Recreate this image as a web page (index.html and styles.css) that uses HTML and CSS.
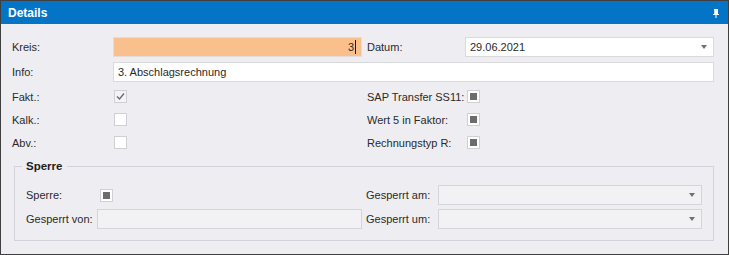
FILE: index.html
```html
<!DOCTYPE html>
<html>
<head>
<meta charset="utf-8">
<link rel="stylesheet" href="styles.css">
</head>
<body>
<div class="panel">
  <div class="header">
    <span class="title">Details</span>
    <svg class="pin" width="8" height="9" viewBox="0 0 8 9">
      <path d="M2 0h4v5H2z" fill="#fff"/>
      <path d="M1 5h6v1H1z" fill="#fff"/>
      <path d="M2 1h1v4H2z" fill="#cfe3f5"/>
      <path d="M3.5 6h1v3h-1z" fill="#fff"/>
    </svg>
  </div>
  <div class="content">
    <div class="form top">
      <label class="lbl">Kreis:</label>
      <div class="field orange num"><span>3</span><i class="caret"></i></div>
      <label class="lbl lbl2">Datum:</label>
      <div class="field combo"><span>29.06.2021</span><i class="arrow"></i></div>
      <label class="lbl">Info:</label>
      <div class="field wide"><span>3. Abschlagsrechnung</span></div>
    </div>
    <div class="form checks">
      <label class="lbl">Fakt.:</label>
      <div class="cbcell"><span class="cb checked"><svg width="11" height="11" viewBox="0 0 11 11"><path d="M2 5.5l2.5 2.5L9 2.5" fill="none" stroke="#6a6a6a" stroke-width="1.4"/></svg></span></div>
      <label class="lbl lbl2">SAP Transfer SS11:</label>
      <div class="cbcell r"><span class="cb ind"></span></div>
      <label class="lbl">Kalk.:</label>
      <div class="cbcell"><span class="cb"></span></div>
      <label class="lbl lbl2">Wert 5 in Faktor:</label>
      <div class="cbcell r"><span class="cb ind"></span></div>
      <label class="lbl">Abv.:</label>
      <div class="cbcell"><span class="cb"></span></div>
      <label class="lbl lbl2">Rechnungstyp R:</label>
      <div class="cbcell r"><span class="cb ind"></span></div>
    </div>
    <fieldset class="group">
      <legend>Sperre</legend>
      <div class="gform">
        <label class="lbl">Sperre:</label>
        <div class="cbcell g"><span class="cb ind"></span></div>
        <label class="lbl lbl2">Gesperrt am:</label>
        <div class="field combo disabled"><span></span><i class="arrow"></i></div>
        <label class="lbl">Gesperrt von:</label>
        <div class="field disabled"><span></span></div>
        <label class="lbl lbl2">Gesperrt um:</label>
        <div class="field combo disabled"><span></span><i class="arrow"></i></div>
      </div>
    </fieldset>
  </div>
</div>
</body>
</html>
```
FILE: styles.css
```css
* { box-sizing: border-box; }
html, body { margin: 0; padding: 0; }
body {
  width: 729px;
  height: 255px;
  font-family: "Liberation Sans", Arial, sans-serif;
  font-size: 11px;
  color: #2a2a2a;
  background: #eeeef2;
}
.panel {
  width: 729px;
  height: 255px;
  border: 1px solid #3f3f3f;
  background: #eeeef2;
  display: flex;
  flex-direction: column;
}
.header {
  height: 23px;
  flex: none;
  background: #0374c6;
  display: flex;
  align-items: center;
  justify-content: space-between;
  padding: 0 8px 0 7px;
}
.title {
  color: #fff;
  font-weight: bold;
  font-size: 12px;
}
.pin { display: block; margin-top: 1px; }
.content {
  padding: 13px 14px 0 11px;
}
.form {
  display: grid;
  grid-template-columns: 101px 249px 103px 249px;
}
.top {
  grid-template-rows: 20px 20px;
  row-gap: 5px;
}
.checks {
  margin-top: 3px;
  grid-template-rows: 23px 23px 23px;
}
.lbl {
  display: flex;
  align-items: center;
  white-space: nowrap;
}
.lbl2 { padding-left: 5px; }
.field {
  display: flex;
  align-items: center;
  border: 1px solid #d9d9de;
  background: #fff;
  padding: 0 5px 0 4px;
}
.field.wide { grid-column: 2 / 5; }
.orange {
  background: #f9c08e;
  border-color: #e4dcd6;
  justify-content: flex-end;
  padding-right: 5px;
}
.caret {
  width: 1px;
  height: 14px;
  background: #1a1a1a;
  margin-left: 1px;
}
.combo { justify-content: space-between; padding-right: 6px; }
.arrow {
  width: 0;
  height: 0;
  border-left: 3.5px solid transparent;
  border-right: 3.5px solid transparent;
  border-top: 4px solid #707070;
}
.disabled {
  background: #f2f2f4;
  border-color: #d4d4dc;
}
.cbcell {
  display: flex;
  align-items: center;
  padding-left: 1px;
}
.cbcell.r { padding-left: 2px; }
.cbcell.g { padding-left: 3px; }
.cb {
  width: 13px;
  height: 13px;
  border: 1px solid #cfcfd4;
  background: #fff;
  display: flex;
  align-items: center;
  justify-content: center;
}
.cb.checked { background: #f4f4f6; }
.cb.ind::after {
  content: "";
  width: 7px;
  height: 7px;
  background: #6c6c6c;
}
.group {
  margin: 5px 0 0 2px;
  border: 1px solid #d2d2da;
  padding: 12px 11px 11px 11px;
  min-width: 0;
}
.group legend {
  font-weight: bold;
  font-size: 11.5px;
  color: #1e1e1e;
  padding: 0 5px 0 4px;
  margin-left: -4px;
  line-height: 14px;
}
.gform {
  display: grid;
  grid-template-columns: 71px 265px 76px 264px;
  grid-template-rows: 20px 20px;
  row-gap: 4px;
}
.gform .lbl2 { padding-left: 4px; }
```
